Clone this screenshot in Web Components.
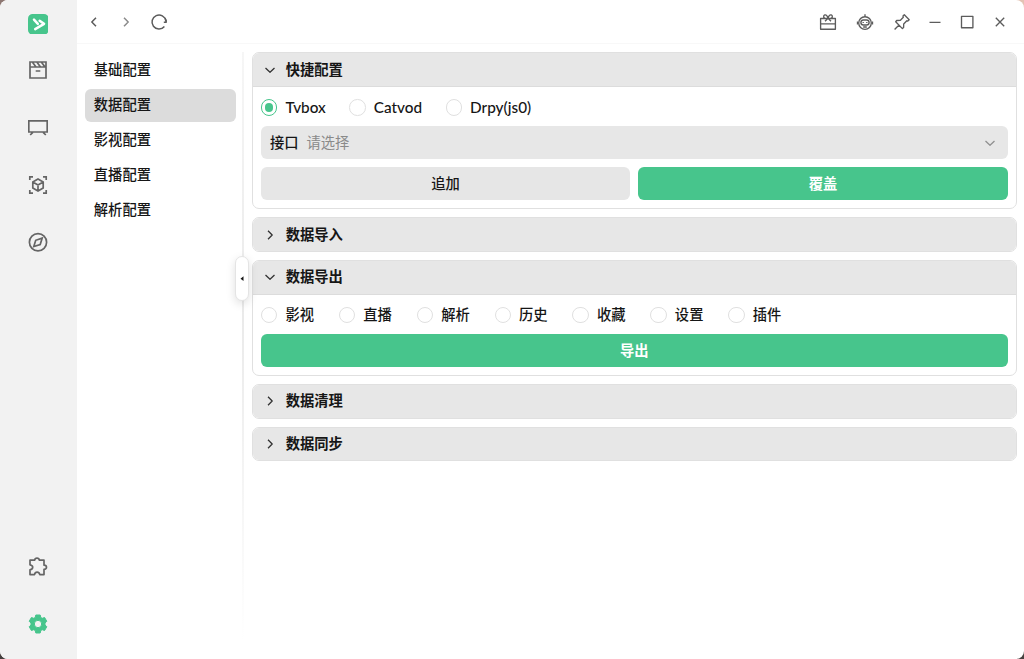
<!DOCTYPE html>
<html lang="zh-CN">
<head>
<meta charset="utf-8">
<title>设置</title>
<style>
  html, body { height: 100%; margin: 0; }
  body {
    overflow: hidden;
    background:
      linear-gradient(transparent 60%, #45403e),
      linear-gradient(90deg, #8d7772, #e3c3b4);
    font: 500 14.3px/20px Lato, "Noto Sans CJK SC", sans-serif;
    color: #161616;
  }
</style>
</head>
<body>
<zy-app></zy-app>

<script>
const ICONS = {
  logo: '<rect width="20" height="20" rx="4.5" fill="#47c58c" stroke="none"/><path d="M5.8 5.5 9.6 9.6M11.3 6.6 15.6 9.6 7 14.7" stroke="#fff" stroke-width="2.4" stroke-linecap="round"/>',
  film: '<path d="M2 2H18V18H2ZM2 7H18M4.5 2.2 8 7M9 2.2 12.5 7M13.5 2.2 17 7M7.7 11H12.3" stroke-linejoin="miter"/>',
  tv: '<path d="M.8 2.9H19.2V14H.8ZM4.8 14.3 2.2 17M15.2 14.3 17.8 17" stroke-linejoin="miter"/>',
  cube: '<path d="M1.8 5V1.8H5M15 1.8H18.2V5M18.2 15V18.2H15M5 18.2H1.8V15M10 4 15.2 7V13L10 16 4.8 13V7ZM4.8 7 10 10 15.2 7M10 10V16" stroke-linejoin="miter"/>',
  compass: '<circle cx="10" cy="10.3" r="8.6"/><path d="M14.2 6.1 7.7 8.3 5.8 14.5 12.2 12.5Z" stroke-linejoin="miter"/>',
  puzzle: '<path d="M2 3.2H6.7C7 .5 11 .5 11.3 3.2H16V8.2C19.3 8.4 19.3 12.2 16 12.4V17.6H11.8C11 14.4 7.2 14.4 6.5 17.6H2V12.8C5.6 12 5.6 8.5 2 7.8Z"/>',
  gear: '<path fill="#47c58c" stroke="#47c58c" stroke-width="1" fill-rule="evenodd" d="M7.8 1H12.2L12.8 3.5 14.2 4.3 16.6 3.5 18.8 7.3 17 9V11L18.8 12.7 16.6 16.5 14.2 15.7 12.8 16.5 12.2 19H7.8L7.2 16.5 5.8 15.7 3.4 16.5 1.2 12.7 3 11V9L1.2 7.3 3.4 3.5 5.8 4.3 7.2 3.5ZM10 6.3A3.7 3.7 0 1 0 10 13.7 3.7 3.7 0 1 0 10 6.3Z"/>',
  back: '<path d="M12 5.8 7.8 10 12 14.2"/>',
  forward: '<path d="M8 5.8 12.2 10 8 14.2"/>',
  down: '<path d="M5.5 8 10 12.2 14.5 8"/>',
  reload: '<path d="M15.4 14.5A7 7 0 1 1 16.9 8.8L17 10.2M17.2 7.4V10.2H14.8"/>',
  gift: '<path d="M2.6 6.5H17.4V17.2H2.6ZM2.6 11.8H17.4M10 6.3C7 7 5 5.8 5.8 3.8 6.8 1.8 9.5 3 10 6.3 10.5 3 13.2 1.8 14.2 3.8 15 5.8 13 7 10 6.3L7 9.3M10 6.3 13 9.3"/>',
  robot: '<circle cx="10" cy="11" r="6.3"/><rect x="5.9" y="8" width="8.2" height="5" rx="2.5"/><path d="M10 4.7V2.3M2.5 9.5V12.5M17.5 9.5V12.5M8.2 10V11M11.8 10V11M8.2 15H11.8"/>',
  pin: '<path d="M12.3 2.8 17.2 7.7 15.8 9 14.8 8.8 11.7 12 11.6 15.6 10.4 16.6 3.7 9.7 4.7 8.5 8.2 8.4 11.3 5.3 11 4.1ZM7 13.1 2.6 17.5"/>',
  minimize: '<path d="M4.5 10.3H15.5"/>',
  maximize: '<path d="M4.5 4.3H15.9V15.7H4.5Z"/>',
  close: '<path d="M5.8 5.8 14.2 14.2M14.2 5.8 5.8 14.2"/>',
  collapse: '<path d="M12.5 5.5V13.5L7.5 9.5Z" fill="currentColor" stroke="none"/>',
};

// <zy-icon name="film">, stroke width can be tuned with --stroke
class ZyIcon extends HTMLElement {
  connectedCallback() {
    this.attachShadow({ mode: 'open' }).innerHTML = `
      <style>
        :host { display: block; flex: none; width: 20px; height: 20px; }
        svg {
          display: block;
          width: 100%;
          height: 100%;
          fill: none;
          stroke: currentColor;
          stroke-width: var(--stroke, 1.7);
          stroke-linejoin: round;
        }
      </style>
      <svg viewBox="0 0 20 20">${ICONS[this.getAttribute('name')]}</svg>
    `;
  }
}

class ZySidebar extends HTMLElement {
  connectedCallback() {
    this.attachShadow({ mode: 'open' }).innerHTML = `
      <style>
        :host {
          display: flex;
          flex-direction: column;
          align-items: center;
          box-sizing: border-box;
          width: 77px;
          padding: 13.5px 0 6px;
          background: #f2f2f2;
          color: #656565;
        }
        .logo { width: 20.6px; height: 20.6px; margin: 0 1px 7.4px 0; }
        .item { display: grid; place-items: center; height: 57.4px; margin-right: 1px; }
        .space { flex: 1; }
      </style>
      <zy-icon class="logo" name="logo"></zy-icon>
      <div class="item"><zy-icon name="film"></zy-icon></div>
      <div class="item"><zy-icon name="tv"></zy-icon></div>
      <div class="item"><zy-icon name="cube"></zy-icon></div>
      <div class="item"><zy-icon name="compass"></zy-icon></div>
      <div class="space"></div>
      <div class="item"><zy-icon name="puzzle"></zy-icon></div>
      <div class="item"><zy-icon name="gear"></zy-icon></div>
    `;
  }
}

class ZyTitlebar extends HTMLElement {
  connectedCallback() {
    this.attachShadow({ mode: 'open' }).innerHTML = `
      <style>
        :host {
          display: flex;
          justify-content: space-between;
          align-items: center;
          box-sizing: border-box;
          height: 44px;
          padding: 0 14px 0 6.7px;
          border-bottom: 1px solid #f8f8f8;
          color: #5c5c5c;
          --stroke: 1.35;
        }
        div { display: flex; align-items: center; gap: 12.7px; }
        .tools { gap: 17px; margin-right: 13px; }
        .disabled { color: #8b8b8b; }
        .nav { --stroke: 1.5; }
      </style>
      <div class="nav">
        <zy-icon name="back"></zy-icon>
        <zy-icon class="disabled" name="forward"></zy-icon>
        <zy-icon name="reload"></zy-icon>
      </div>
      <div>
        <div class="tools">
          <zy-icon name="gift"></zy-icon>
          <zy-icon name="robot"></zy-icon>
          <zy-icon name="pin"></zy-icon>
        </div>
        <zy-icon name="minimize" style="margin-left: -12.7px"></zy-icon>
        <zy-icon name="maximize"></zy-icon>
        <zy-icon name="close"></zy-icon>
      </div>
    `;
  }
}

class ZyMenuItem extends HTMLElement {
  connectedCallback() {
    this.attachShadow({ mode: 'open' }).innerHTML = `
      <style>
        :host {
          display: flex;
          align-items: center;
          height: 33px;
          padding-left: 8.5px;
          border-radius: 6px;
        }
        :host([active]) { background: #dcdcdc; }
      </style>
      <slot></slot>
    `;
  }
}

class ZyPanel extends HTMLElement {
  connectedCallback() {
    const open = this.hasAttribute('open');
    this.attachShadow({ mode: 'open' }).innerHTML = `
      <style>
        :host {
          display: block;
          border: 1px solid #e0e0e0;
          border-radius: 7px;
          overflow: hidden;
        }
        header {
          display: flex;
          align-items: center;
          gap: 5.8px;
          height: 32.6px;
          padding-left: 7px;
          background: #e7e7e7;
          font-weight: 700;
          --stroke: 1.3;
        }
        header zy-icon { color: #333; }
        .body {
          display: flex;
          flex-direction: column;
          gap: 8px;
          padding: 8px;
          border-top: 1px solid #dcdcdc;
        }
      </style>
      <header><zy-icon name="${open ? 'down' : 'forward'}"></zy-icon>${this.getAttribute('heading')}</header>
      ${open ? '<div class="body"><slot></slot></div>' : ''}
    `;
  }
}

class ZyRadio extends HTMLElement {
  connectedCallback() {
    this.attachShadow({ mode: 'open' }).innerHTML = `
      <style>
        :host { display: flex; align-items: center; gap: 8px; height: 25px; }
        i {
          display: grid;
          place-items: center;
          box-sizing: border-box;
          width: 16.5px;
          height: 16.5px;
          border: 1px solid #e0e0e0;
          border-radius: 50%;
        }
        :host([checked]) i { border-color: #47c58c; }
        :host([checked]) i::after {
          content: '';
          width: 8.5px;
          height: 8.5px;
          border-radius: 50%;
          background: #47c58c;
        }
      </style>
      <i></i><slot></slot>
    `;
  }
}

class ZySelect extends HTMLElement {
  connectedCallback() {
    this.attachShadow({ mode: 'open' }).innerHTML = `
      <style>
        :host {
          display: flex;
          align-items: center;
          gap: 8px;
          height: 33px;
          padding: 0 7.5px 0 9px;
          border-radius: 6px;
          background: #e7e7e7;
        }
        .placeholder { flex: 1; color: #8a8a8a; font-weight: 400; }
        zy-icon { color: #909090; --stroke: 1.3; }
      </style>
      <slot></slot>
      <span class="placeholder">${this.getAttribute('placeholder')}</span>
      <zy-icon name="down"></zy-icon>
    `;
  }
}

class ZyButton extends HTMLElement {
  connectedCallback() {
    this.attachShadow({ mode: 'open' }).innerHTML = `
      <style>
        :host {
          display: grid;
          place-items: center;
          flex: 1 0 auto;
          height: 33px;
          border-radius: 6px;
          background: #e6e6e6;
        }
        :host([primary]) { background: #47c58c; color: #fff; font-weight: 700; }
      </style>
      <slot></slot>
    `;
  }
}

class ZyApp extends HTMLElement {
  connectedCallback() {
    this.attachShadow({ mode: 'open' }).innerHTML = `
      <style>
        :host {
          display: grid;
          grid-template-columns: 77px 1fr;
          height: 100vh;
          border-radius: 8px;
          overflow: hidden;
          background: #fff;
        }
        main { display: grid; grid-template-rows: 44px 1fr; }
        .content { display: grid; grid-template-columns: 165px 1fr; }
        .menu {
          display: flex;
          flex-direction: column;
          gap: 1.9px;
          padding: 9.7px 6.5px 0 8.3px;
        }
        .settings {
          position: relative;
          display: flex;
          flex-direction: column;
          gap: 8px;
          padding: 8.4px 7.4px 0 9.9px;
        }
        .divider {
          position: absolute;
          top: 8px;
          bottom: 16px;
          left: 0;
          width: 1.5px;
          background: linear-gradient(#f6f6f6, #eaeaea 45%, #fff);
        }
        .handle {
          position: absolute;
          top: 212px;
          left: -7px;
          display: grid;
          place-items: center;
          box-sizing: border-box;
          width: 14px;
          height: 45px;
          border: 1px solid #e4e4e4;
          border-radius: 7px;
          background: #fff;
          box-shadow: 0 3px 10px rgba(0, 0, 0, .13);
        }
        .handle zy-icon { width: 12px; height: 12px; }
        .row { display: flex; gap: 8.2px; }
        .row zy-button { flex: 1; }
        .radios { display: flex; margin-bottom: -1.5px; }
        .sources { gap: 23.5px; font-size: 15.3px; }
        .types { gap: 24.8px; }
      </style>
      <zy-sidebar></zy-sidebar>
      <main>
        <zy-titlebar></zy-titlebar>
        <div class="content">
          <nav class="menu">
            <zy-menu-item>基础配置</zy-menu-item>
            <zy-menu-item active>数据配置</zy-menu-item>
            <zy-menu-item>影视配置</zy-menu-item>
            <zy-menu-item>直播配置</zy-menu-item>
            <zy-menu-item>解析配置</zy-menu-item>
          </nav>
          <section class="settings">
            <div class="divider"></div>
            <div class="handle"><zy-icon name="collapse"></zy-icon></div>
            <zy-panel heading="快捷配置" open>
              <div class="radios sources">
                <zy-radio checked>Tvbox</zy-radio>
                <zy-radio>Catvod</zy-radio>
                <zy-radio>Drpy(js0)</zy-radio>
              </div>
              <zy-select placeholder="请选择">接口</zy-select>
              <div class="row">
                <zy-button>追加</zy-button>
                <zy-button primary>覆盖</zy-button>
              </div>
            </zy-panel>
            <zy-panel heading="数据导入"></zy-panel>
            <zy-panel heading="数据导出" open>
              <div class="radios types">
                <zy-radio>影视</zy-radio>
                <zy-radio>直播</zy-radio>
                <zy-radio>解析</zy-radio>
                <zy-radio>历史</zy-radio>
                <zy-radio>收藏</zy-radio>
                <zy-radio>设置</zy-radio>
                <zy-radio>插件</zy-radio>
              </div>
              <zy-button primary>导出</zy-button>
            </zy-panel>
            <zy-panel heading="数据清理"></zy-panel>
            <zy-panel heading="数据同步"></zy-panel>
          </section>
        </div>
      </main>
    `;
  }
}

customElements.define('zy-icon', ZyIcon);
customElements.define('zy-sidebar', ZySidebar);
customElements.define('zy-titlebar', ZyTitlebar);
customElements.define('zy-menu-item', ZyMenuItem);
customElements.define('zy-panel', ZyPanel);
customElements.define('zy-radio', ZyRadio);
customElements.define('zy-select', ZySelect);
customElements.define('zy-button', ZyButton);
customElements.define('zy-app', ZyApp);
</script>
</body>
</html>
